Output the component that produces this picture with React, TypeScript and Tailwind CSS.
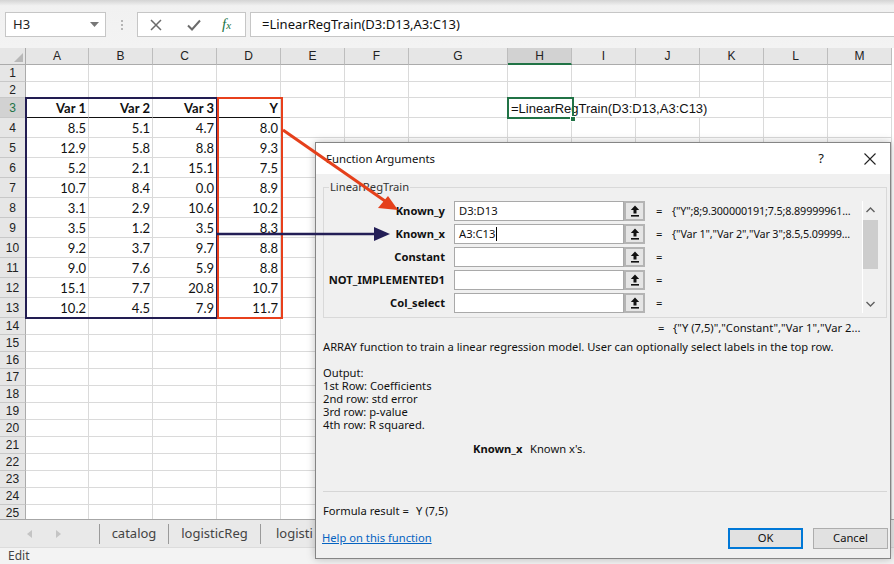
import React from "react";

const COLS = ["A", "B", "C", "D", "E", "F", "G", "H", "I", "J", "K", "L", "M"];
const ROWS = Array.from({ length: 25 }, (_, i) => i + 1);

const data: Record<number, string[]> = {
  3: ["Var 1", "Var 2", "Var 3", "Y"],
  4: ["8.5", "5.1", "4.7", "8.0"],
  5: ["12.9", "5.8", "8.8", "9.3"],
  6: ["5.2", "2.1", "15.1", "7.5"],
  7: ["10.7", "8.4", "0.0", "8.9"],
  8: ["3.1", "2.9", "10.6", "10.2"],
  9: ["3.5", "1.2", "3.5", "8.3"],
  10: ["9.2", "3.7", "9.7", "8.8"],
  11: ["9.0", "7.6", "5.9", "8.8"],
  12: ["15.1", "7.7", "20.8", "10.7"],
  13: ["10.2", "4.5", "7.9", "11.7"],
};

const rowHeight = (r: number) =>
  r === 1 ? "h-[17px]" : r === 2 ? "h-[16px]" : r <= 13 ? "h-[20px]" : "h-[17px]";

// small up-arrow used on the range picker buttons
const PickIcon = () => (
  <svg width="10" height="12" viewBox="0 0 10 12">
    <path d="M5 0.5 L0.8 5 H3.5 V8.5 H6.5 V5 H9.2 Z" fill="#111" />
    <rect x="1" y="10" width="8" height="1.6" fill="#111" />
  </svg>
);

const FormulaBar = () => (
  <div className="h-[48px] bg-[#f3f3f3] bg-gradient-to-b from-[#d4d4d4] via-[#f1f1f1] via-[12%] to-[#f3f3f3] flex items-start pt-[12px] font-['Noto_Sans',sans-serif]">
    <div className="ml-[5px] w-[101px] h-[25px] bg-white border border-[#c6c6c6] flex items-center pl-[7px] pr-[6px] text-[13px] text-[#222]">
      <span>H3</span>
      <svg className="ml-auto" width="9" height="5" viewBox="0 0 9 5">
        <path d="M0 0 H9 L4.5 5 Z" fill="#777" />
      </svg>
    </div>
    <div className="w-[31px] h-[25px] flex flex-col items-center justify-center gap-[2px]">
      <span className="w-[2px] h-[2px] bg-[#b5b5b5]" />
      <span className="w-[2px] h-[2px] bg-[#b5b5b5]" />
      <span className="w-[2px] h-[2px] bg-[#b5b5b5]" />
    </div>
    <div className="w-[109px] h-[25px] bg-white border border-[#c6c6c6] flex items-center">
      <svg className="ml-[12px]" width="12" height="12" viewBox="0 0 12 12">
        <path d="M1 1 L11 11 M11 1 L1 11" stroke="#6b6b6b" strokeWidth="1.5" />
      </svg>
      <svg className="ml-[25px]" width="14" height="12" viewBox="0 0 14 12">
        <path d="M1 6.5 L5 10.5 L13 1.5" stroke="#6b6b6b" strokeWidth="2" fill="none" />
      </svg>
      <span className="ml-[21px] font-['Liberation_Serif',serif] italic text-[#217346] text-[15px] leading-none">
        f<span className="text-[11px]">x</span>
      </span>
    </div>
    <div className="ml-[4px] flex-1 h-[25px] bg-white border border-[#c6c6c6] border-r-0 flex items-center pl-[11px] text-[13px] text-[#111]">
      =LinearRegTrain(D3:D13,A3:C13)
    </div>
  </div>
);

const Grid = () => (
  <div className="grid grid-cols-[26px_63px_64px_64px_64px_64px_64px_99px_64px_64px_64px_64px_64px_64px] content-start h-[471px] overflow-hidden font-['Liberation_Sans',sans-serif]">
    <div className="h-[17px] bg-[#e6e6e6] border-r border-b border-[#ababab] relative">
      <svg className="absolute right-[2px] bottom-[2px]" width="9" height="9" viewBox="0 0 9 9">
        <path d="M9 0 V9 H0 Z" fill="#b8b8b8" />
      </svg>
    </div>
    {COLS.map((c) =>
      c === "H" ? (
        <div
          key={c}
          className="h-[17px] bg-[#d2d2d2] border-r border-[#bdbdbd] border-b-2 border-b-[#217346] flex items-center justify-center text-[12px] text-[#222]"
        >
          {c}
        </div>
      ) : (
        <div
          key={c}
          className="h-[17px] bg-[#e6e6e6] border-r border-[#bdbdbd] border-b border-b-[#ababab] flex items-center justify-center text-[12px] text-[#222]"
        >
          {c}
        </div>
      )
    )}
    {ROWS.map((r) => (
      <React.Fragment key={r}>
        <div
          className={`${rowHeight(r)} ${
            r === 3 ? "bg-[#d2d2d2] text-[#217346]" : "bg-[#e6e6e6] text-[#222]"
          } border-r border-r-[#ababab] border-b border-b-[#c8c8c8] flex items-center justify-center text-[12px]`}
        >
          {r}
        </div>
        {COLS.map((c, ci) => {
          const val = data[r] && ci < 4 ? data[r][ci] : "";
          const isHead = r === 3 && ci < 4;
          if (r === 3 && c === "H") {
            return (
              <div
                key={c}
                className={`${rowHeight(r)} relative z-10 border-b border-[#dadada] flex items-end whitespace-nowrap pl-[3px] text-[13px] leading-[17px] text-[#111]`}
              >
                =LinearRegTrain(D3:D13,A3:C13)
              </div>
            );
          }
          const noRight = r === 3 && (c === "I" || c === "J");
          return (
            <div
              key={c}
              className={`${rowHeight(r)} ${noRight ? "" : "border-r"} border-b ${
                isHead ? "border-b-[#111] border-r-[#dadada]" : "border-[#dadada]"
              } flex items-end justify-end pr-[2px] font-['Lato',sans-serif] text-[13px] leading-[17px] text-[#111] ${
                isHead ? "font-bold" : ""
              }`}
            >
              {val}
            </div>
          );
        })}
      </React.Fragment>
    ))}
  </div>
);

const SheetTabs = () => (
  <div className="h-[28px] bg-[#e9e9e9] border-t border-[#a6a6a6] flex items-center font-['Noto_Sans',sans-serif] text-[13px] text-[#444]">
    <svg className="ml-[27px]" width="5" height="8" viewBox="0 0 5 8">
      <path d="M5 0 V8 L0 4 Z" fill="#c4c4c4" />
    </svg>
    <svg className="ml-[24px]" width="5" height="8" viewBox="0 0 5 8">
      <path d="M0 0 V8 L5 4 Z" fill="#c4c4c4" />
    </svg>
    <span className="ml-[38px] w-px h-[20px] bg-[#9a9a9a]" />
    <span className="w-[68px] text-center">catalog</span>
    <span className="w-px h-[20px] bg-[#9a9a9a]" />
    <span className="w-[91px] text-center">logisticReg</span>
    <span className="w-px h-[20px] bg-[#9a9a9a]" />
    <span className="ml-[15px] w-[37px] overflow-hidden whitespace-nowrap">logisticReg2</span>
  </div>
);

const StatusBar = () => (
  <div className="h-[17px] bg-[#f3f3f3] border-t border-[#dcdcdc] flex items-center pl-[8px] font-['Noto_Sans',sans-serif] text-[12px] text-[#444]">
    Edit
  </div>
);

const fields = [
  { label: "Known_y", value: "D3:D13", result: '{"Y";8;9.300000191;7.5;8.89999961...' },
  { label: "Known_x", value: "A3:C13", result: '{"Var 1","Var 2","Var 3";8.5,5.09999...', caret: true },
  { label: "Constant", value: "", result: "" },
  { label: "NOT_IMPLEMENTED1", value: "", result: "" },
  { label: "Col_select", value: "", result: "" },
];

const FunctionDialog = () => (
  <div className="absolute left-[315px] top-[142px] w-[576px] h-[417px] bg-[#f0f0f0] border border-[#858585] shadow-[0_0_8px_rgba(0,0,0,0.25)] flex flex-col font-['Noto_Sans',sans-serif] text-[11.2px] text-[#111] z-20">
    <div className="h-[31px] bg-white flex items-center pl-[10px] shrink-0 text-[11.4px]">
      <span>Function Arguments</span>
      <span className="ml-auto text-[13px] mr-[40px]">?</span>
      <svg className="mr-[14px]" width="12" height="12" viewBox="0 0 12 12">
        <path d="M0.5 0.5 L11.5 11.5 M11.5 0.5 L0.5 11.5" stroke="#222" strokeWidth="1.1" />
      </svg>
    </div>
    <div className="pl-[7px] pr-[3px]">
      <div className="mt-[13px] h-[131px] border border-[#d9d9d9] relative pt-[13px]">
        <span className="absolute -top-[9px] left-[5px] px-[1px] bg-[#f0f0f0] text-[#333] leading-[16px]">
          LinearRegTrain
        </span>
        <div className="flex flex-col gap-[3px]">
          {fields.map((f) => (
            <div key={f.label} className="h-[20px] flex items-center">
              <span className="w-[121px] text-right font-bold">{f.label}</span>
              <div className="ml-[9px] w-[170px] h-[20px] bg-white border border-[#a9a9a9] flex items-center pl-[4px]">
                {f.value}
                {f.caret && <span className="w-px h-[14px] bg-black ml-[1px]" />}
              </div>
              <div className="w-[21px] h-[20px] bg-[#e5e5e5] border-2 border-[#b4b4b4] flex items-center justify-center">
                <PickIcon />
              </div>
              <span className="ml-[11px] w-[16px]">=</span>
              <span className="text-[10.8px] tracking-[-0.15px] whitespace-nowrap">{f.result}</span>
            </div>
          ))}
        </div>
        <div className="absolute right-[8px] top-[13px] w-[16px] h-[112px] border-l border-white flex flex-col items-center">
          <svg className="mt-[6px]" width="9" height="6" viewBox="0 0 9 6">
            <path d="M0.5 5 L4.5 1 L8.5 5" stroke="#606060" strokeWidth="1.4" fill="none" />
          </svg>
          <div className="mt-[7px] w-[15px] h-[49px] bg-[#cdcdcd]" />
          <svg className="mt-auto mb-[6px]" width="9" height="6" viewBox="0 0 9 6">
            <path d="M0.5 1 L4.5 5 L8.5 1" stroke="#606060" strokeWidth="1.4" fill="none" />
          </svg>
        </div>
      </div>
      <div className="mt-[3px] h-[13px] leading-[13px] flex pl-[335px] whitespace-nowrap">
        <span className="w-[15px]">=</span>
        <span>{'{"Y (7,5)","Constant","Var 1","Var 2...'}</span>
      </div>
      <div className="mt-[6px] leading-[13px] whitespace-nowrap">
        ARRAY function to train a linear regression model. User can optionally select labels in the top row.
      </div>
      <div className="mt-[13px] leading-[13px]">
        <div>Output:</div>
        <div>1st Row: Coefficients</div>
        <div>2nd row: std error</div>
        <div>3rd row: p-value</div>
        <div>4th row: R squared.</div>
      </div>
      <div className="mt-[11px] leading-[13px] flex pl-[150px]">
        <span className="font-bold w-[57px]">Known_x</span>
        <span>Known x's.</span>
      </div>
      <div className="mt-[36px] border-t border-[#d6d6d6]" />
      <div className="mt-[12px] leading-[13px] flex">
        <span className="w-[93px]">Formula result =</span>
        <span>Y (7,5)</span>
      </div>
      <div className="mt-[11px] h-[21px] flex items-center">
        <span className="text-[#0563c1] underline -ml-px">Help on this function</span>
        <div className="ml-auto w-[75px] h-[21px] bg-[#e1e1e1] border-2 border-[#0078d7] flex items-center justify-center">
          OK
        </div>
        <div className="ml-[10px] mr-[-1px] w-[75px] h-[21px] bg-[#e1e1e1] border border-[#adadad] flex items-center justify-center">
          Cancel
        </div>
      </div>
    </div>
  </div>
);

const Overlays = () => (
  <>
    {/* range outlines */}
    <div className="absolute left-[25px] top-[97px] w-[193px] h-[222px] border-2 border-[#221d52] pointer-events-none z-10" />
    <div className="absolute left-[217px] top-[97px] w-[66px] h-[222px] border-2 border-[#e8401c] pointer-events-none z-10" />
    {/* active cell */}
    <div className="absolute left-[507px] top-[97px] w-[67px] h-[22px] border-2 border-[#217346] pointer-events-none z-10" />
    <div className="absolute left-[570px] top-[116px] w-[6px] h-[6px] bg-[#217346] border border-white pointer-events-none z-10" />
    {/* arrows */}
    <svg className="absolute left-0 top-0 pointer-events-none z-30" width="894" height="564" viewBox="0 0 894 564">
      <line x1="283" y1="130" x2="385" y2="201" stroke="#e5401b" strokeWidth="3" />
      <polygon points="398,210 378,208 388,196" fill="#e5401b" />
      <line x1="217" y1="234" x2="377" y2="234" stroke="#231e56" strokeWidth="2.5" />
      <polygon points="390,234 374,227 374,241" fill="#231e56" />
    </svg>
  </>
);

export default function App() {
  return (
    <div className="relative w-[894px] h-[564px] overflow-hidden bg-white">
      <div className="flex flex-col h-full">
        <FormulaBar />
        <Grid />
        <SheetTabs />
        <StatusBar />
      </div>
      <Overlays />
      <FunctionDialog />
    </div>
  );
}
